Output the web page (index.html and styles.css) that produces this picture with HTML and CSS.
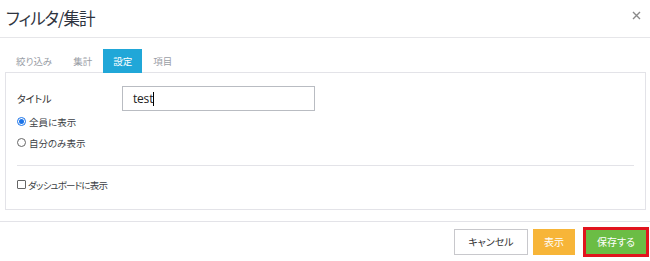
FILE: index.html
```html
<!DOCTYPE html>
<html lang="ja">
<head>
<meta charset="utf-8">
<link rel="stylesheet" href="styles.css">
</head>
<body>
<div class="dialog">
  <div class="header">
    <h1 class="title">フィルタ/集計</h1>
    <svg class="close" width="9" height="9" viewBox="0 0 9 9"><path d="M1 1L8 8M8 1L1 8" stroke="#8a8a8a" stroke-width="1.4" fill="none"/></svg>
  </div>
  <div class="tabs">
    <span class="tab">絞り込み</span>
    <span class="tab">集計</span>
    <span class="tab active">設定</span>
    <span class="tab">項目</span>
  </div>
  <div class="panel">
    <div class="row-title">
      <span class="label">タイトル</span>
      <div class="input"><span class="input-text">test</span><span class="caret"></span></div>
    </div>
    <div class="radio-row"><span class="radio checked"></span><span class="opt">全員に表示</span></div>
    <div class="radio-row"><span class="radio"></span><span class="opt">自分のみ表示</span></div>
    <div class="divider"></div>
    <div class="check-row"><span class="checkbox"></span><span class="opt narrow">ダッシュボードに表示</span></div>
  </div>
  <div class="footer">
    <button class="btn btn-cancel">キャンセル</button>
    <button class="btn btn-show">表示</button>
    <button class="btn btn-save">保存する</button>
  </div>
</div>
</body>
</html>
```
FILE: styles.css
```css
* { box-sizing: border-box; }
html, body { margin: 0; padding: 0; background: #fff; }
body {
  width: 650px;
  height: 261px;
  overflow: hidden;
  font-family: "Noto Sans CJK JP", "Noto Sans", sans-serif;
  font-feature-settings: "palt" 1;
  color: #333;
}
.dialog { width: 650px; }
.header {
  height: 38px;
  border-bottom: 1px solid #e6e6e9;
  display: flex;
  align-items: center;
  justify-content: space-between;
  padding: 0 9px 2px 6px;
}
.title {
  margin: 0;
  font-size: 16.5px;
  font-weight: normal;
  color: #2f3440;
  line-height: 20px;
  letter-spacing: -1px;
}
.close { display: block; margin-bottom: 5px; }
.tabs {
  display: flex;
  margin-top: 11px;
  padding-left: 6px;
  height: 23px;
}
.tab {
  height: 24px;
  padding: 0 10px;
  margin-right: 1px;
  font-size: 9.5px;
  line-height: 24px;
  color: #9a9ea6;
}
.tab.active {
  background: #20a7d8;
  color: #fff;
  position: relative;
  z-index: 1;
}
.panel {
  margin-left: 5px;
  width: 641px;
  height: 138px;
  border: 1px solid #e3e3e8;
  padding: 13px 11px 0 11px;
}
.row-title {
  display: flex;
  align-items: center;
  height: 25px;
}
.label {
  width: 105px;
  font-size: 10px;
  color: #333;
}
.input {
  width: 193px;
  height: 25px;
  border: 1px solid #b9bcc2;
  display: flex;
  align-items: center;
  padding-left: 10px;
}
.input-text {
  font-family: "Open Sans", "Liberation Sans", sans-serif;
  font-size: 12px;
  color: #222;
  letter-spacing: -0.2px;
}
.caret {
  width: 1px;
  height: 14px;
  background: #000;
}
.radio-row, .check-row {
  display: flex;
  align-items: center;
  height: 21px;
  font-size: 9.5px;
  color: #3c3f46;
}
.check-row { margin-top: 1px; }
.narrow { letter-spacing: -0.8px; }
.radio {
  width: 9px;
  height: 9px;
  border: 1px solid #666;
  border-radius: 50%;
  margin-right: 3px;
  position: relative;
}
.radio.checked {
  border-color: #1a73e8;
}
.radio.checked::after {
  content: "";
  position: absolute;
  left: 1px;
  top: 1px;
  width: 5px;
  height: 5px;
  border-radius: 50%;
  background: #1a73e8;
}
.divider {
  height: 1px;
  background: #e3e3e8;
  margin: 12px 0 8px 0;
}
.checkbox {
  width: 9px;
  height: 9px;
  border: 1px solid #666;
  border-radius: 1px;
  margin-right: 2px;
}
.footer {
  margin-top: 11px;
  border-top: 1px solid #e3e3e8;
  height: 40px;
  display: flex;
  justify-content: flex-end;
  align-items: center;
  padding: 0 1px 0 0;
}
.btn {
  font-family: "Noto Sans CJK JP", "Noto Sans", sans-serif;
  font-feature-settings: "palt" 1;
  font-size: 10px;
  height: 26px;
  border: none;
  padding: 0;
  cursor: pointer;
}
.btn-cancel {
  width: 74px;
  background: #fff;
  border: 1px solid #c8c8cc;
  color: #333;
  margin-right: 5px;
}
.btn-show {
  width: 42px;
  background: #f7b538;
  color: #fff;
  margin-right: 8px;
}
.btn-save {
  width: 66px;
  height: 30px;
  background: #6bbd45;
  border: 3px solid #e1141e;
  color: #fff;
}
```
